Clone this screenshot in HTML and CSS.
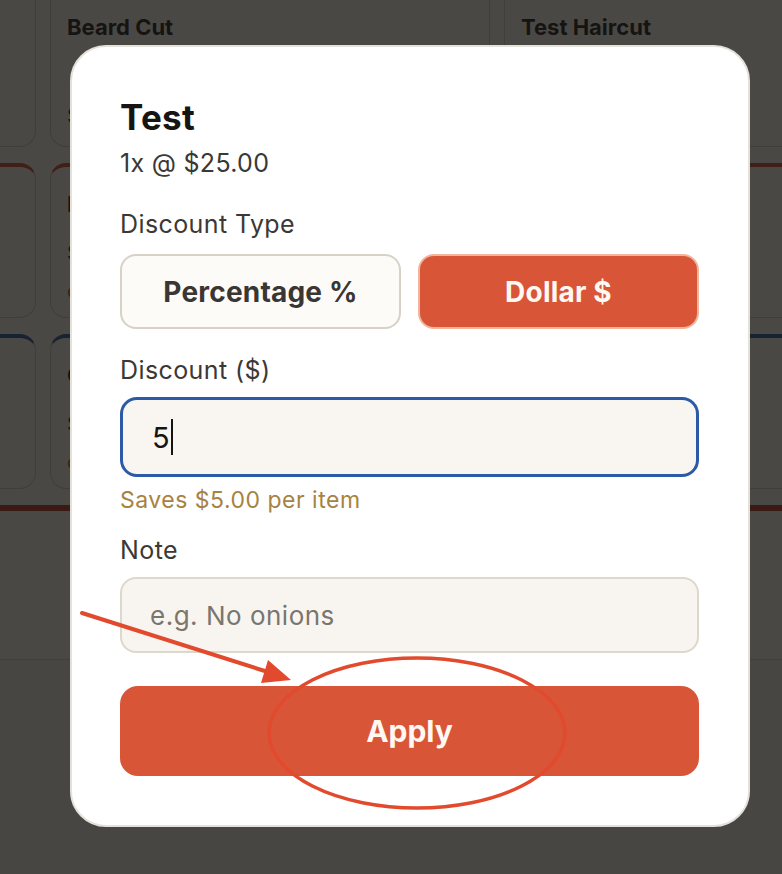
FILE: index.html
```html
<!DOCTYPE html>
<html lang="en">
<head>
<meta charset="utf-8">
<title>Discount</title>
<link rel="stylesheet" href="styles.css">
</head>
<body>
<div class="page">
  <div class="grid">
    <div class="card first-row cut-left"></div>
    <div class="card first-row">
      <div class="card-title">Beard Cut</div>
      <div class="card-price">$15.00</div>
    </div>
    <div class="card first-row cut-right">
      <div class="card-title">Test Haircut</div>
      <div class="card-price">$25.00</div>
    </div>

    <div class="card red cut-left"></div>
    <div class="card red">
      <div class="card-title">Beard Trim</div>
      <div class="card-price">$20.00</div>
      <div class="card-tag">cuts</div>
    </div>
    <div class="card red cut-right">
      <div class="card-title">Fade</div>
      <div class="card-price">$30.00</div>
      <div class="card-tag">cuts</div>
    </div>

    <div class="card blue cut-left"></div>
    <div class="card blue">
      <div class="card-title">Color</div>
      <div class="card-price">$40.00</div>
      <div class="card-tag">color</div>
    </div>
    <div class="card blue cut-right">
      <div class="card-title">Shampoo</div>
      <div class="card-price">$10.00</div>
      <div class="card-tag">wash</div>
    </div>
  </div>
  <div class="panel"></div>
  <div class="footer"></div>
</div>

<div class="overlay"></div>

<div class="modal">
  <h2 class="title">Test</h2>
  <div class="subtitle">1x @ $25.00</div>

  <div class="label first-label">Discount Type</div>
  <div class="toggle">
    <div class="tbtn">Percentage %</div>
    <div class="tbtn active">Dollar $</div>
  </div>

  <div class="label disc-label">Discount ($)</div>
  <div class="field focus"><span class="val">5</span><span class="caret"></span></div>
  <div class="hint">Saves $5.00 per item</div>

  <div class="label note-label">Note</div>
  <div class="field note"><span class="ph">e.g. No onions</span></div>

  <div class="apply">Apply</div>
</div>

<svg class="annot" width="782" height="874" viewBox="0 0 782 874">
  <line x1="82" y1="613" x2="268" y2="672" stroke="#e24a2e" stroke-width="4" stroke-linecap="round"/>
  <polygon points="291,680 261,683 268,660" fill="#e24a2e"/>
  <ellipse cx="417" cy="733" rx="148" ry="75" fill="none" stroke="#e24a2e" stroke-width="3.5"/>
</svg>
</body>
</html>
```

FILE: styles.css
```css
html, body {
  margin: 0;
  padding: 0;
  width: 782px;
  height: 874px;
  overflow: hidden;
  font-family: "Inter", "Noto Sans", "Liberation Sans", sans-serif;
}

.page {
  background: #f7f3ec;
  height: 874px;
}

.grid {
  display: grid;
  grid-template-columns: 36px 440px 1fr;
  grid-template-rows: 147px 155px 155px;
  column-gap: 14px;
  row-gap: 16px;
  width: 820px;
}

.card {
  box-sizing: border-box;
  border: 1.5px solid #cfc8bd;
  border-radius: 16px;
  background: #f7f3ec;
  padding: 23px 16px 0;
}

.card.first-row {
  border-top: none;
  border-top-left-radius: 0;
  border-top-right-radius: 0;
  padding-top: 13px;
}

.card.red { border-top: 4px solid #c9472d; }
.card.blue { border-top: 4px solid #2c55a0; }

.card.cut-left {
  border-left: none;
  border-top-left-radius: 0;
  border-bottom-left-radius: 0;
}

.card-title {
  font-size: 22px;
  line-height: 28px;
  font-weight: 700;
  color: #1b1a19;
}

.card-price {
  margin-top: 62px;
  font-size: 20px;
  line-height: 26px;
  color: #2a2826;
}

.red .card-price, .blue .card-price { margin-top: 22px; }

.card-tag {
  margin-top: 12px;
  font-size: 20px;
  line-height: 26px;
  color: #c9472d;
}

.panel {
  margin-top: 16px;
  border-top: 6px solid #b8321e;
  height: 148px;
}

.footer {
  border-top: 1.5px solid #d3ccc2;
  background: #efeae2;
  height: 220px;
}

.overlay {
  position: fixed;
  inset: 0;
  background: rgba(20, 18, 16, 0.76);
  z-index: 1;
}

.modal {
  position: absolute;
  left: 70px;
  top: 45px;
  width: 680px;
  box-sizing: border-box;
  background: #ffffff;
  border: 2px solid #e4e0da;
  border-radius: 36px;
  padding: 50px 49px 49px 48px;
  z-index: 2;
  display: flex;
  flex-direction: column;
}

.title {
  margin: 0;
  font-size: 35px;
  line-height: 40px;
  font-weight: 700;
  color: #161514;
  letter-spacing: 0.3px;
}

.subtitle {
  margin-top: 11px;
  font-size: 25px;
  line-height: 30px;
  color: #3b3835;
  letter-spacing: 0.3px;
}

.label {
  font-size: 25px;
  line-height: 30px;
  color: #3b3835;
  letter-spacing: 0.4px;
}

.first-label { margin-top: 31px; }
.disc-label { margin-top: 26px; }
.note-label { margin-top: 21px; }

.toggle {
  margin-top: 15px;
  display: flex;
  gap: 17px;
}

.tbtn {
  flex: 1;
  height: 75px;
  box-sizing: border-box;
  border: 2px solid #d7d1c6;
  border-radius: 16px;
  background: #fdfbf7;
  display: flex;
  align-items: center;
  justify-content: center;
  font-size: 28px;
  font-weight: 700;
  color: #393633;
  letter-spacing: 0.2px;
}

.tbtn.active {
  background: #d95538;
  border-color: #f0b59c;
  color: #fff8f2;
}

.field {
  margin-top: 12px;
  box-sizing: border-box;
  border-radius: 17px;
  background: #f9f6f2;
  display: flex;
  align-items: center;
}

.field.focus {
  height: 80px;
  border: 3px solid #2d5aa6;
  padding-left: 29px;
}

.val {
  font-size: 29px;
  color: #151413;
}

.caret {
  display: inline-block;
  width: 2px;
  height: 36px;
  background: #151413;
  margin-left: 1px;
}

.hint {
  margin-top: 9px;
  font-size: 23px;
  line-height: 28px;
  color: #a8823f;
  letter-spacing: 0.5px;
}

.field.note {
  height: 76px;
  border: 2px solid #ddd7cc;
  border-radius: 16px;
  background: #f8f5f0;
  padding-left: 28px;
}

.ph {
  font-size: 26px;
  color: #7a756e;
  letter-spacing: 0.5px;
}

.apply {
  margin-top: 33px;
  height: 90px;
  border-radius: 18px;
  background: #d95538;
  display: flex;
  align-items: center;
  justify-content: center;
  font-size: 30px;
  font-weight: 700;
  color: #fff8f2;
}

.annot {
  position: fixed;
  left: 0;
  top: 0;
  z-index: 3;
  pointer-events: none;
}
```
